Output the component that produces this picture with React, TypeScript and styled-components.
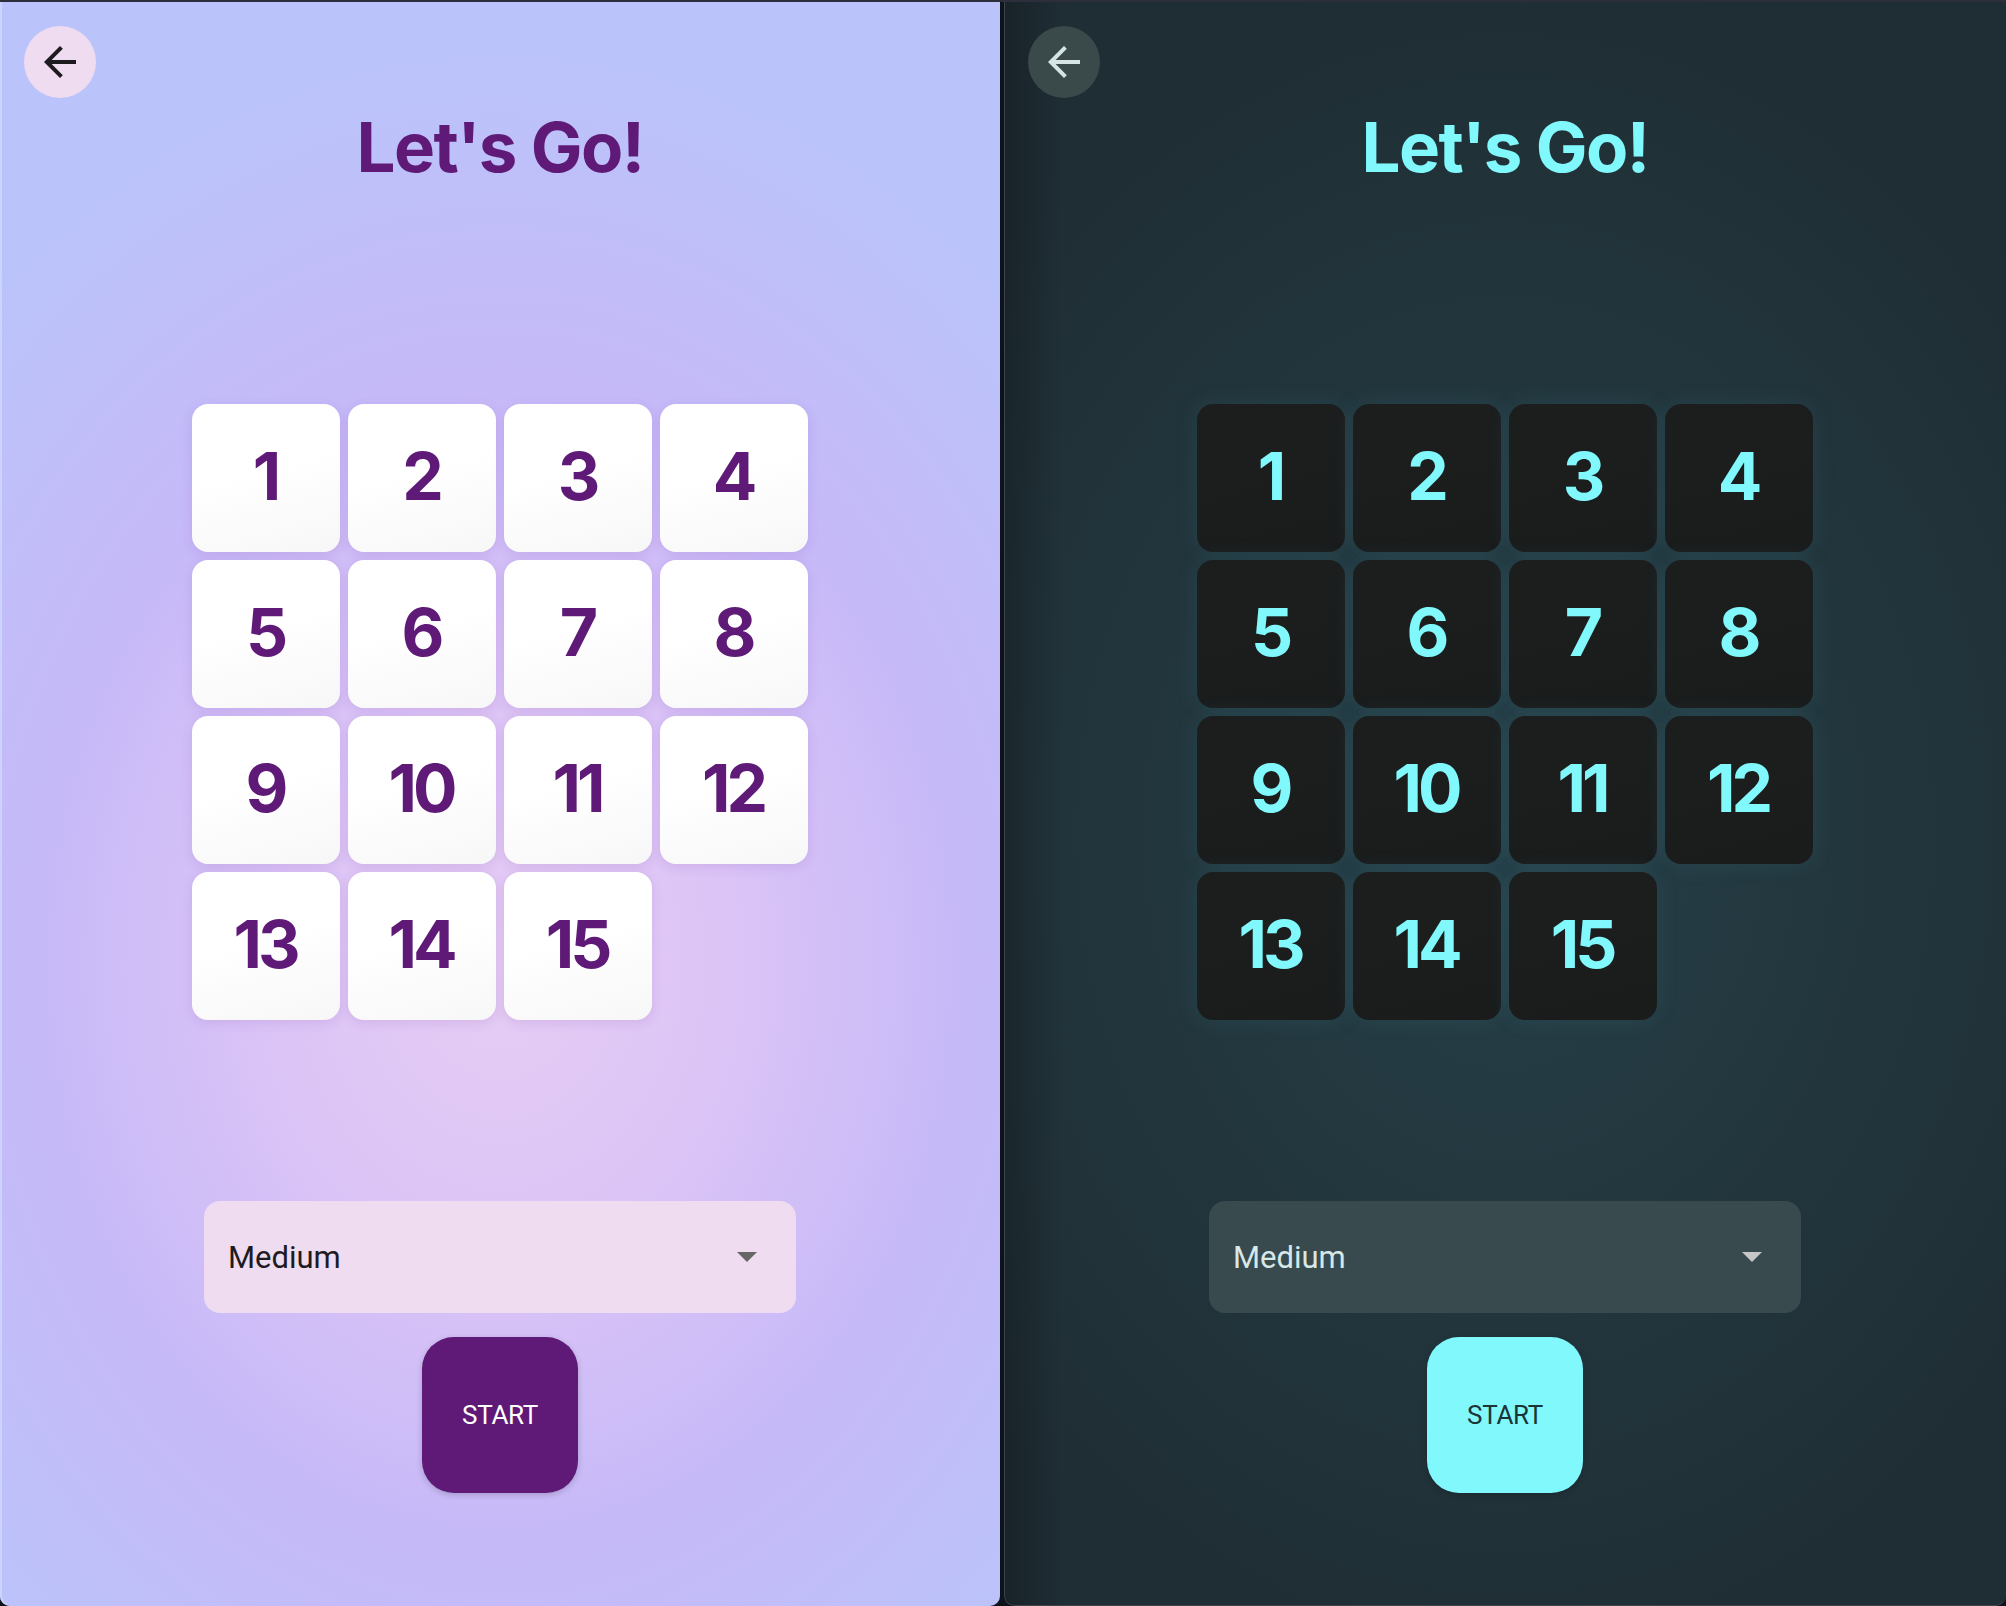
import styled, { createGlobalStyle, ThemeProvider } from 'styled-components'

type PanelTheme = {
  background: string
  edge: string
  accent: string
  tile: string
  tileShadow: string
  iconBg: string
  iconInk: string
  fieldBg: string
  fieldInk: string
  caret: string
  buttonBg: string
  buttonInk: string
}

const lightTheme: PanelTheme = {
  background:
    'radial-gradient(ellipse 75% 58% at 50% 60%, #e6cdf4 0%, #dcc4f6 30%, #c6b9f8 62%, #bac4fa 100%)',
  edge: 'inset 2px 0 0 #ccd4fc',
  accent: '#5f1a78',
  tile: 'linear-gradient(165deg, #ffffff 45%, #f7f7f8 100%)',
  tileShadow: '0 3px 12px rgba(120, 60, 170, 0.14)',
  iconBg: '#f0dcf0',
  iconInk: '#1d1b20',
  fieldBg: '#f0dcf0',
  fieldInk: '#1d1b20',
  caret: '#666666',
  buttonBg: '#5f1a78',
  buttonInk: '#ffffff',
}

const darkTheme: PanelTheme = {
  background:
    'linear-gradient(90deg, rgba(0, 0, 0, 0.22) 0, rgba(0, 0, 0, 0) 60px), radial-gradient(ellipse 70% 55% at 50% 52%, #263f48 0%, #23373e 45%, #1f2d34 100%)',
  edge: 'inset 1px 0 0 #3c4648, inset 0 -1px 0 #3c4648',
  accent: '#80f8fc',
  tile: 'linear-gradient(165deg, #1c1e1e 45%, #1a1c1c 100%)',
  tileShadow: '0 0 22px rgba(70, 140, 160, 0.16)',
  iconBg: '#3a4a4b',
  iconInk: '#d6e4e4',
  fieldBg: '#384a4e',
  fieldInk: '#d6e8e8',
  caret: '#c6c6c6',
  buttonBg: '#80f8fc',
  buttonInk: '#1c3434',
}

const GlobalStyle = createGlobalStyle`
  html, body {
    margin: 0;
    padding: 0;
    background: #0e121a;
  }
  body {
    font-family: Inter, "Noto Sans", sans-serif;
  }
`

const Screen = styled.div`
  width: 2006px;
  height: 1606px;
  box-sizing: border-box;
  border-top: 2px solid #2c2e3c;
  display: flex;
  gap: 4px;
  background: #0e121a;
  overflow: hidden;
`

const Panel = styled.section<{ $width: number }>`
  width: ${({ $width }) => $width}px;
  height: 100%;
  box-sizing: border-box;
  border-radius: 0 0 10px 10px;
  background: ${({ theme }) => theme.background};
  box-shadow: ${({ theme }) => theme.edge};
  display: flex;
  flex-direction: column;
  align-items: center;
  padding: 24px 24px 0;
`

const TopBar = styled.header`
  align-self: stretch;
  display: flex;
  align-items: center;
`

const BackButton = styled.button`
  width: 72px;
  height: 72px;
  border: none;
  border-radius: 50%;
  padding: 0;
  display: grid;
  place-items: center;
  background: ${({ theme }) => theme.iconBg};
  color: ${({ theme }) => theme.iconInk};
  cursor: pointer;
`

const Title = styled.h1`
  margin: 8px 0 0;
  font-family: Inter, "Noto Sans", sans-serif;
  font-size: 69px;
  line-height: 83px;
  font-weight: 700;
  letter-spacing: -1.5px;
  color: ${({ theme }) => theme.accent};
`

const Board = styled.div`
  margin-top: 215px;
  display: grid;
  grid-template-columns: repeat(4, 148px);
  grid-auto-rows: 148px;
  gap: 8px;
`

const Tile = styled.div`
  border-radius: 16px;
  background: ${({ theme }) => theme.tile};
  box-shadow: ${({ theme }) => theme.tileShadow};
  display: grid;
  place-items: center;
  font-family: Inter, "Noto Sans", sans-serif;
  font-size: 66px;
  font-weight: 700;
  letter-spacing: -4px;
  color: ${({ theme }) => theme.accent};
  padding: 0 2px 4px 0;
`

const Select = styled.div`
  margin-top: 181px;
  width: 592px;
  height: 112px;
  box-sizing: border-box;
  border-radius: 16px;
  padding: 0 39px 0 24px;
  background: ${({ theme }) => theme.fieldBg};
  display: flex;
  align-items: center;
  justify-content: space-between;
`

const SelectValue = styled.span`
  font-family: Roboto, "Liberation Sans", sans-serif;
  font-size: 31px;
  color: ${({ theme }) => theme.fieldInk};
`

const Caret = styled.span`
  width: 0;
  height: 0;
  border-left: 10px solid transparent;
  border-right: 10px solid transparent;
  border-top: 10px solid ${({ theme }) => theme.caret};
`

const StartButton = styled.button`
  margin-top: 24px;
  width: 156px;
  height: 156px;
  border: none;
  border-radius: 32px;
  background: ${({ theme }) => theme.buttonBg};
  color: ${({ theme }) => theme.buttonInk};
  font-family: Roboto, "Liberation Sans", sans-serif;
  font-size: 26px;
  font-weight: 400;
  letter-spacing: -0.3px;
  box-shadow: 0 2px 6px rgba(0, 0, 0, 0.18);
  cursor: pointer;
`

function ArrowBack() {
  return (
    <svg width="48" height="48" viewBox="0 0 24 24" fill="currentColor" aria-hidden="true">
      <path d="M20 11H7.83l5.59-5.59L12 4l-8 8 8 8 1.41-1.41L7.83 13H20v-2z" />
    </svg>
  )
}

const tiles = Array.from({ length: 15 }, (_, index) => index + 1)

function GameSetup({ width }: { width: number }) {
  return (
    <Panel $width={width}>
      <TopBar>
        <BackButton type="button" aria-label="Back">
          <ArrowBack />
        </BackButton>
      </TopBar>
      <Title>Let's Go!</Title>
      <Board>
        {tiles.map((value) => (
          <Tile key={value}>{value}</Tile>
        ))}
      </Board>
      <Select role="combobox" aria-label="Difficulty">
        <SelectValue>Medium</SelectValue>
        <Caret />
      </Select>
      <StartButton type="button">START</StartButton>
    </Panel>
  )
}

export default function App() {
  return (
    <>
      <GlobalStyle />
      <Screen>
        <ThemeProvider theme={lightTheme}>
          <GameSetup width={1000} />
        </ThemeProvider>
        <ThemeProvider theme={darkTheme}>
          <GameSetup width={1002} />
        </ThemeProvider>
      </Screen>
    </>
  )
}
